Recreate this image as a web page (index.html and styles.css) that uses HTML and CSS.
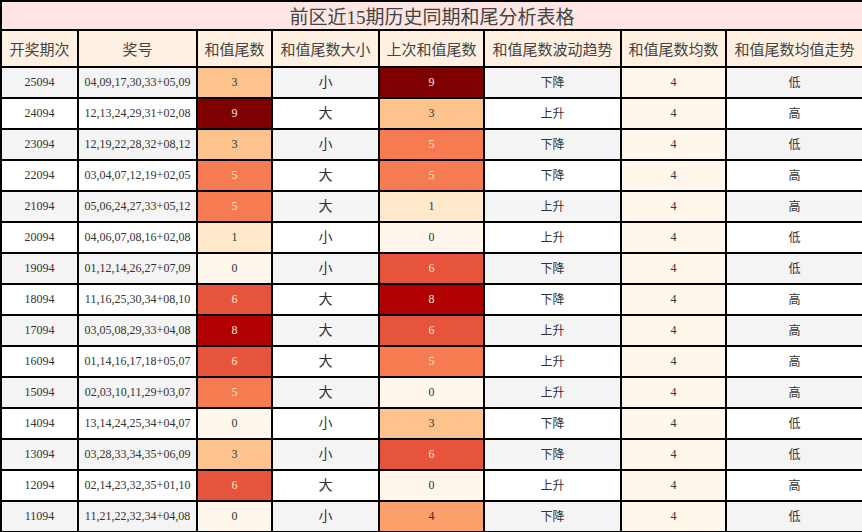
FILE: index.html
```html
<!DOCTYPE html>
<html lang="zh">
<head>
<meta charset="utf-8">
<title>前区近15期历史同期和尾分析表格</title>
<link rel="stylesheet" href="styles.css">
</head>
<body>
<table class="grid">
  <colgroup>
    <col class="w1"><col class="w2"><col class="w3"><col class="w4"><col class="w5"><col class="w6"><col class="w7"><col class="w8">
  </colgroup>
  <tr class="title"><td colspan="8">前区近15期历史同期和尾分析表格</td></tr>
  <tr class="head">
    <td>开奖期次</td><td>奖号</td><td>和值尾数</td><td>和值尾数大小</td><td>上次和值尾数</td><td>和值尾数波动趋势</td><td>和值尾数均数</td><td>和值尾数均值走势</td>
  </tr>
  <tr class="row odd"><td>25094</td><td>04,09,17,30,33+05,09</td><td class="c3">3</td><td class="cj">小</td><td class="c9">9</td><td class="cj2">下降</td><td class="c0">4</td><td class="cj2">低</td></tr>
  <tr class="row"><td>24094</td><td>12,13,24,29,31+02,08</td><td class="c9">9</td><td class="cj">大</td><td class="c3">3</td><td class="cj2">上升</td><td class="c0">4</td><td class="cj2">高</td></tr>
  <tr class="row odd"><td>23094</td><td>12,19,22,28,32+08,12</td><td class="c3">3</td><td class="cj">小</td><td class="c5">5</td><td class="cj2">下降</td><td class="c0">4</td><td class="cj2">低</td></tr>
  <tr class="row"><td>22094</td><td>03,04,07,12,19+02,05</td><td class="c5">5</td><td class="cj">大</td><td class="c5">5</td><td class="cj2">下降</td><td class="c0">4</td><td class="cj2">高</td></tr>
  <tr class="row odd"><td>21094</td><td>05,06,24,27,33+05,12</td><td class="c5">5</td><td class="cj">大</td><td class="c1">1</td><td class="cj2">上升</td><td class="c0">4</td><td class="cj2">高</td></tr>
  <tr class="row"><td>20094</td><td>04,06,07,08,16+02,08</td><td class="c1">1</td><td class="cj">小</td><td class="c0">0</td><td class="cj2">上升</td><td class="c0">4</td><td class="cj2">低</td></tr>
  <tr class="row odd"><td>19094</td><td>01,12,14,26,27+07,09</td><td class="c0">0</td><td class="cj">小</td><td class="c6">6</td><td class="cj2">下降</td><td class="c0">4</td><td class="cj2">低</td></tr>
  <tr class="row"><td>18094</td><td>11,16,25,30,34+08,10</td><td class="c6">6</td><td class="cj">大</td><td class="c8">8</td><td class="cj2">下降</td><td class="c0">4</td><td class="cj2">高</td></tr>
  <tr class="row odd"><td>17094</td><td>03,05,08,29,33+04,08</td><td class="c8">8</td><td class="cj">大</td><td class="c6">6</td><td class="cj2">上升</td><td class="c0">4</td><td class="cj2">高</td></tr>
  <tr class="row"><td>16094</td><td>01,14,16,17,18+05,07</td><td class="c6">6</td><td class="cj">大</td><td class="c5">5</td><td class="cj2">上升</td><td class="c0">4</td><td class="cj2">高</td></tr>
  <tr class="row odd"><td>15094</td><td>02,03,10,11,29+03,07</td><td class="c5">5</td><td class="cj">大</td><td class="c0">0</td><td class="cj2">上升</td><td class="c0">4</td><td class="cj2">高</td></tr>
  <tr class="row"><td>14094</td><td>13,14,24,25,34+04,07</td><td class="c0">0</td><td class="cj">小</td><td class="c3">3</td><td class="cj2">下降</td><td class="c0">4</td><td class="cj2">低</td></tr>
  <tr class="row odd"><td>13094</td><td>03,28,33,34,35+06,09</td><td class="c3">3</td><td class="cj">小</td><td class="c6">6</td><td class="cj2">下降</td><td class="c0">4</td><td class="cj2">低</td></tr>
  <tr class="row"><td>12094</td><td>02,14,23,32,35+01,10</td><td class="c6">6</td><td class="cj">大</td><td class="c0">0</td><td class="cj2">上升</td><td class="c0">4</td><td class="cj2">高</td></tr>
  <tr class="row odd"><td>11094</td><td>11,21,22,32,34+04,08</td><td class="c0">0</td><td class="cj">小</td><td class="c4">4</td><td class="cj2">下降</td><td class="c0">4</td><td class="cj2">低</td></tr>
</table>
</body>
</html>
```

FILE: styles.css
```css
html, body {
  margin: 0;
  padding: 0;
  background: #ffffff;
}
body {
  width: 862px;
  height: 532px;
  overflow: hidden;
}
.grid {
  width: 862px;
  border-collapse: collapse;
  table-layout: fixed;
  font-family: "Liberation Serif", "Noto Sans CJK SC", serif;
  color: #333333;
}
.grid td {
  border: 2px solid #000000;
  padding: 0;
  text-align: center;
  vertical-align: middle;
  white-space: nowrap;
  overflow: hidden;
}
.w1 { width: 77px; }
.w2 { width: 119px; }
.w3 { width: 75px; }
.w4 { width: 107px; }
.w5 { width: 105px; }
.w6 { width: 137px; }
.w7 { width: 105px; }
.w8 { width: 137px; }

.title td {
  height: 27px;
  background: #fde6e1;
  font-size: 19px;
  color: #444444;
}
.head td {
  height: 35px;
  background: #fff0e2;
  font-size: 15px;
  color: #444444;
  font-family: "Noto Sans CJK SC", sans-serif;
}
.row td {
  height: 29px;
  font-size: 12px;
  background: #ffffff;
}
.row.odd td {
  background: #f4f4f4;
}
.row td.cj {
  font-family: "Noto Sans CJK SC", sans-serif;
  font-size: 14px;
  line-height: 1;
  height: 26px;
  padding-bottom: 3px;
}
.row td.cj2 {
  font-family: "Noto Sans CJK SC", sans-serif;
  font-size: 12px;
  line-height: 1;
  height: 27px;
  padding-bottom: 2px;
}
.row td.c0 { background: #fff7ec; }
.row td.c1 { background: #feeacb; }
.row td.c3 { background: #fdc38c; }
.row td.c4 { background: #fca16c; }
.row td.c5 { background: #f67b51; color: #fde8d8; }
.row td.c6 { background: #e6543b; color: #fde8d8; }
.row td.c8 { background: #b00000; color: #fde8d8; }
.row td.c9 { background: #7f0000; color: #fde8d8; }
```
